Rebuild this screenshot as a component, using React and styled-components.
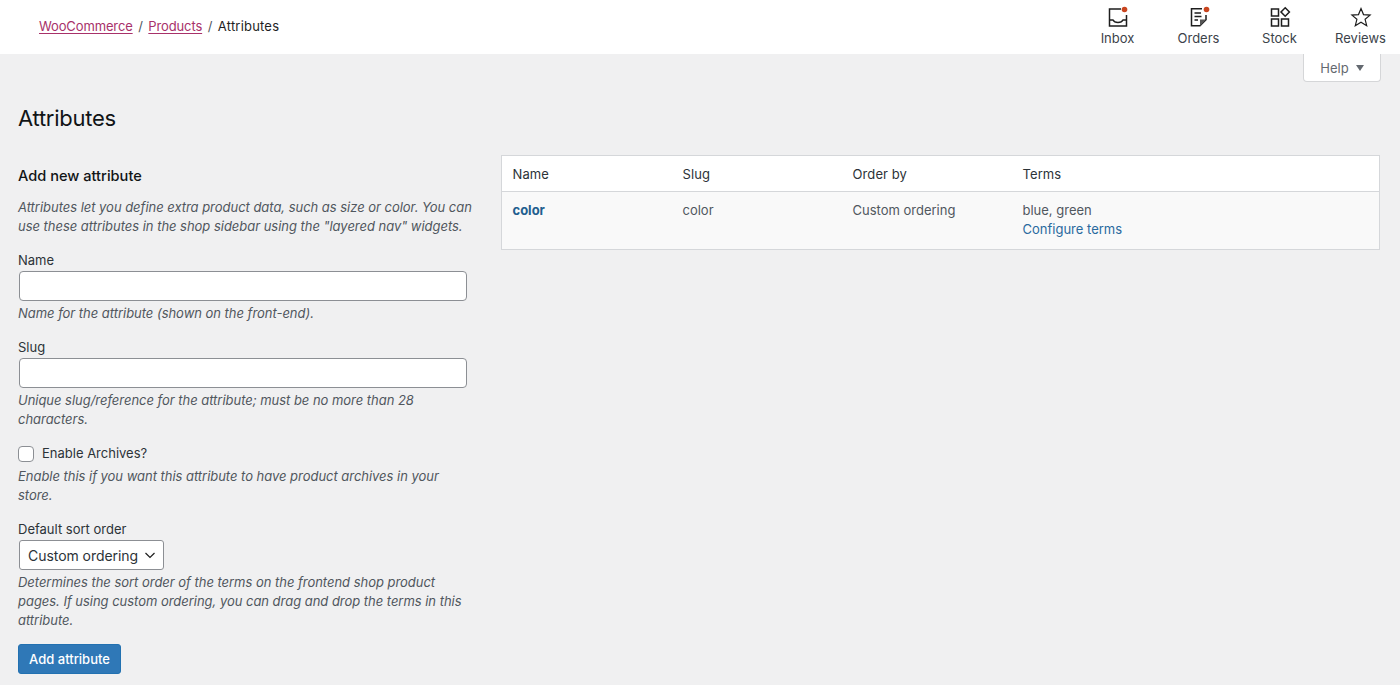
import React from "react"
import styled, { createGlobalStyle } from "styled-components"

const GlobalStyle = createGlobalStyle`
  html, body {
    margin: 0;
    padding: 0;
    background: #f0f0f1;
    color: #1e1e1e;
    font-family: Inter, "Liberation Sans", sans-serif;
    font-size: 13px;
    overflow: hidden;
  }
  * { box-sizing: border-box; }
`

const InboxIcon = () => (
  <svg width="24" height="24" viewBox="0 0 24 24" fill="none" stroke="#1e1e1e" strokeWidth="1.5">
    <path d="M15 4H3.500v17h17V10" />
    <path d="M3.500 15H7c1 2 2.500 2.500 5 2.500s4-.5 5-2.500h3.500" />
    <circle cx="18.500" cy="4.500" r="2.800" fill="#c9451f" stroke="none" />
  </svg>
)

const OrdersIcon = () => (
  <svg width="24" height="24" viewBox="0 0 24 24" fill="none" stroke="#1e1e1e" strokeWidth="1.5">
    <path d="M15 3.700H4.500v17h8.500l6-6V10" />
    <path d="M7.500 8H14M7.500 11.500h7M7.500 15H11" strokeWidth="1.300" />
    <path d="M13 21v-6.500h6z" fill="#555" stroke="none" />
    <circle cx="19.500" cy="4.500" r="2.800" fill="#c9451f" stroke="none" />
  </svg>
)

const StockIcon = () => (
  <svg width="24" height="24" viewBox="0 0 24 24" fill="none" stroke="#1e1e1e" strokeWidth="1.500">
    <rect x="3.500" y="4" width="7" height="7" />
    <rect x="3.500" y="14" width="7" height="7" />
    <rect x="13.500" y="14" width="7" height="7" />
    <path d="M17.200 2.800l4.200 4.200-4.200 4.200L13 7z" />
  </svg>
)

const StarIcon = () => (
  <svg width="24" height="24" viewBox="0 0 24 24" fill="none" stroke="#1e1e1e" strokeWidth="1.200" strokeLinejoin="miter">
    <path d="M12 3.600l2.500 6 6.600.5-5 4.200 1.600 6.400L12 17.200l-5.700 3.500 1.600-6.400-5-4.200 6.600-.5z" />
  </svg>
)

const activities = [
  { label: "Inbox", Icon: InboxIcon },
  { label: "Orders", Icon: OrdersIcon },
  { label: "Stock", Icon: StockIcon },
  { label: "Reviews", Icon: StarIcon },
]

const App = () => (
  <>
    <GlobalStyle />
    <Header>
      <Breadcrumbs>
        <Crumb href="#">WooCommerce</Crumb>
        <Slash>/</Slash>
        <Crumb href="#">Products</Crumb>
        <Slash>/</Slash>
        <Current>Attributes</Current>
      </Breadcrumbs>
      <Activity>
        {activities.map(({ label, Icon }) => (
          <ActivityItem key={label}>
            <Icon />
            <span>{label}</span>
          </ActivityItem>
        ))}
      </Activity>
    </Header>
    <HelpRow>
      <HelpTab>
        Help <Caret />
      </HelpTab>
    </HelpRow>
    <Page>
      <Title>Attributes</Title>
      <Columns>
        <FormColumn>
          <FormTitle>Add new attribute</FormTitle>
          <Hint>
            Attributes let you define extra product data, such as size or color. You can use these
            attributes in the shop sidebar using the "layered nav" widgets.
          </Hint>
          <Field>
            <Label>Name</Label>
            <TextInput type="text" />
            <Hint>Name for the attribute (shown on the front-end).</Hint>
          </Field>
          <Field>
            <Label>Slug</Label>
            <TextInput type="text" />
            <Hint>Unique slug/reference for the attribute; must be no more than 28 characters.</Hint>
          </Field>
          <Field>
            <CheckRow>
              <CheckBox type="checkbox" />
              Enable Archives?
            </CheckRow>
            <Hint>Enable this if you want this attribute to have product archives in your store.</Hint>
          </Field>
          <Field>
            <Label>Default sort order</Label>
            <SelectBox>
              Custom ordering
              <svg width="12" height="12" viewBox="0 0 12 12" fill="none" stroke="#1e1e1e" strokeWidth="1.200">
                <path d="M1.500 4l4.500 4.500L10.500 4" />
              </svg>
            </SelectBox>
            <Hint>
              Determines the sort order of the terms on the frontend shop product pages. If using
              custom ordering, you can drag and drop the terms in this attribute.
            </Hint>
          </Field>
          <SubmitButton>Add attribute</SubmitButton>
        </FormColumn>
        <TablePanel>
          <HeadRow>
            <Cell>Name</Cell>
            <Cell>Slug</Cell>
            <Cell>Order by</Cell>
            <Cell>Terms</Cell>
          </HeadRow>
          <BodyRow>
            <Cell>
              <NameLink href="#">color</NameLink>
            </Cell>
            <Cell>color</Cell>
            <Cell>Custom ordering</Cell>
            <Cell>
              blue, green
              <br />
              <TermsLink href="#">Configure terms</TermsLink>
            </Cell>
          </BodyRow>
        </TablePanel>
      </Columns>
    </Page>
  </>
)

export default App

const Header = styled.header`
  height: 54px;
  background: #fff;
  display: flex;
  justify-content: space-between;
  padding-left: 39px;
`

const Breadcrumbs = styled.nav`
  display: flex;
  align-items: center;
  height: 52px;
  font-size: 13px;
  color: #1e1e1e;
`

const Crumb = styled.a`
  color: #a8316a;
  letter-spacing: -0.13px;
  text-decoration: underline;
  text-underline-offset: 2px;
`

const Current = styled.span`
  letter-spacing: 0.2px;
`

const Slash = styled.span`
  color: #50575e;
  margin: 0 5.5px;
`

const Activity = styled.div`
  display: flex;
  padding-top: 5px;
  margin-right: -1px;
`

const ActivityItem = styled.div`
  width: 81px;
  display: flex;
  flex-direction: column;
  align-items: center;
  gap: 1px;
  font-size: 13px;
  line-height: 16px;
  color: #3c434a;
`

const HelpRow = styled.div`
  display: flex;
  justify-content: flex-end;
  padding-right: 19px;
`

const HelpTab = styled.div`
  width: 78px;
  height: 28px;
  background: #fff;
  border: 1px solid #d5d6d8;
  border-top: 0;
  border-radius: 0 0 4px 4px;
  display: flex;
  align-items: center;
  justify-content: center;
  gap: 7px;
  color: #646970;
  font-size: 13px;
`

const Caret = styled.i`
  width: 0;
  height: 0;
  border-left: 4px solid transparent;
  border-right: 4px solid transparent;
  border-top: 6px solid #646970;
`

const Page = styled.main`
  padding: 0 20px 0 18px;
`

const Title = styled.h1`
  margin: 22px 0 0;
  font-size: 22px;
  line-height: 29px;
  font-weight: 400;
  letter-spacing: -0.25px;
  color: #111416;
`

const Columns = styled.div`
  display: flex;
  align-items: flex-start;
  margin-top: 22px;
`

const FormColumn = styled.section`
  width: 483px;
  flex-shrink: 0;
  padding-top: 10px;
`

const FormTitle = styled.h2`
  margin: 0 0 11px;
  font-size: 14.6px;
  line-height: 22px;
  font-weight: 500;
  color: #111416;
`

const Hint = styled.p`
  margin: 0;
  max-width: 456px;
  font-style: italic;
  font-size: 13px;
  line-height: 19px;
  letter-spacing: -0.03px;
  color: #50575e;
`

const Field = styled.div`
  margin-top: 15px;
`

const Label = styled.label`
  display: block;
  font-size: 13px;
  line-height: 19px;
  color: #2c3338;
  margin-bottom: 1px;
`

const TextInput = styled.input`
  display: block;
  width: 448px;
  height: 30px;
  margin: 0 0 3px 1px;
  background: #fff;
  border: 1px solid #8c8f94;
  border-radius: 4px;
`

const CheckRow = styled.label`
  display: flex;
  align-items: center;
  gap: 8px;
  font-size: 13px;
  line-height: 19px;
  color: #2c3338;
  margin-bottom: 4px;
`

const CheckBox = styled.input`
  appearance: none;
  width: 16px;
  height: 16px;
  margin: 0;
  background: #fff;
  border: 1px solid #8c8f94;
  border-radius: 4px;
`

const SelectBox = styled.div`
  width: 145px;
  height: 30px;
  margin: 1px 0 3px 1px;
  padding: 0 7px 0 8px;
  display: flex;
  align-items: center;
  justify-content: space-between;
  background: #fff;
  border: 1px solid #8c8f94;
  border-radius: 3px;
  font-size: 14px;
  letter-spacing: -0.05px;
  color: #2c3338;
`

const SubmitButton = styled.button`
  display: block;
  margin-top: 14px;
  width: 103px;
  height: 30px;
  background: #2f78b7;
  border: 1px solid #2271b1;
  border-radius: 3px;
  color: #fff;
  font-family: inherit;
  font-size: 13px;
  font-weight: 500;
  padding: 0;
`

const TablePanel = styled.section`
  width: 879px;
  border: 1px solid #d5d7da;
  background: #f9f9f9;
  font-size: 13px;
  color: #50575e;
`

const HeadRow = styled.div`
  display: grid;
  grid-template-columns: repeat(3, 170px) 1fr;
  align-items: center;
  height: 36px;
  background: #fff;
  color: #2c3338;
  letter-spacing: 0.1px;
  border-bottom: 1px solid #d5d7da;
`

const BodyRow = styled.div`
  display: grid;
  grid-template-columns: repeat(3, 170px) 1fr;
  height: 57px;
  padding-top: 9px;
  line-height: 19px;
`

const Cell = styled.div`
  padding-left: 10.5px;
`

const NameLink = styled.a`
  color: #1f5f8f;
  font-weight: 700;
  text-decoration: none;
`

const TermsLink = styled.a`
  color: #2a6a9e;
  text-decoration: none;
`
